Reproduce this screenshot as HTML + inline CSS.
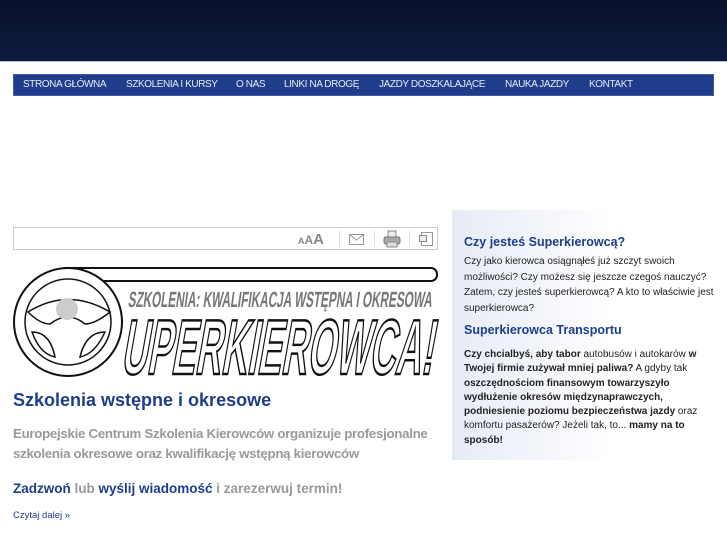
<!DOCTYPE html>
<html><head><meta charset="utf-8"><style>
*{margin:0;padding:0;box-sizing:border-box}
body{width:727px;height:545px;background:#fff;font-family:"Liberation Sans",sans-serif;position:relative;overflow:hidden}
.hdr{position:absolute;left:0;top:0;width:727px;height:61px;background:linear-gradient(#08112a,#0f1c40)}
.hl{position:absolute;left:0;top:61px;width:727px;height:1px;background:#b8bfd0}
.nav{position:absolute;left:13px;top:74px;width:701px;height:22px;background:#1f3d8b;border:1px solid #3b5aa8;color:#e8ecf6;font-size:10px;line-height:20px;white-space:nowrap}
.nav span{position:absolute;top:0;letter-spacing:-.4px}
.tool{position:absolute;left:13px;top:227px;width:425px;height:23px;border:1px solid #ccc}
.side{position:absolute;left:452px;top:210px;width:160px;height:250px;background:linear-gradient(90deg,#e6ecf6,#f4f6fb 60%,#fff)}
h2{position:absolute;font-size:18px;color:#1f3d8b;font-weight:bold;white-space:nowrap}
.gray{position:absolute;left:13px;top:424px;font-size:13.3px;color:#999;font-weight:bold;line-height:20px;white-space:nowrap;letter-spacing:-.3px}
.s{position:absolute;font-size:10px;color:#222;line-height:15.5px;width:255px;left:464px}
.b{color:#1f3d8b}
</style></head><body>
<div class="hdr"></div><div class="hl"></div>
<div class="nav"><span style="left:9px">STRONA GŁÓWNA</span><span style="left:112px">SZKOLENIA I KURSY</span><span style="left:222px">O NAS</span><span style="left:270px">LINKI NA DROGĘ</span><span style="left:365px">JAZDY DOSZKALAJĄCE</span><span style="left:491px">NAUKA JAZDY</span><span style="left:575px">KONTAKT</span></div>
<div class="side"></div>
<div class="tool"><span style="position:absolute;left:284px;top:3px;color:#888;font-weight:bold;white-space:nowrap"><span style="font-size:9px">A</span><span style="font-size:12px">A</span><span style="font-size:15px">A</span></span>
<div style="position:absolute;left:325px;top:3px;width:1px;height:16px;background:#ddd"></div>
<svg style="position:absolute;left:335px;top:6px" width="15" height="11"><rect x=".5" y=".5" width="14" height="10" fill="#fff" stroke="#999"/><path d="M1 1l6.5 5 6.5-5" fill="none" stroke="#999"/></svg>
<div style="position:absolute;left:360px;top:3px;width:1px;height:16px;background:#ddd"></div>
<svg style="position:absolute;left:369px;top:2px" width="18" height="18"><rect x="5" y="1" width="8" height="7" fill="#eee" stroke="#888"/><rect x="1" y="7" width="16" height="7" rx="2" fill="#aaa" stroke="#777"/><rect x="4" y="12" width="10" height="5" fill="#ddd" stroke="#888"/></svg>
<div style="position:absolute;left:395px;top:3px;width:1px;height:16px;background:#ddd"></div>
<svg style="position:absolute;left:405px;top:3px" width="15" height="16"><rect x="2.5" y="1.5" width="11" height="13" fill="#fff" stroke="#999"/><rect x=".5" y="4.5" width="7" height="6" fill="#eee" stroke="#888"/></svg>
</div>
<svg style="position:absolute;left:0;top:262px" width="445" height="120">
<rect x="60" y="6" width="377" height="13" rx="6" fill="#fff" stroke="#111" stroke-width="2"/>
<path d="M80 17 A56 56 0 0 1 120 60" fill="none" stroke="#888" stroke-width="7"/>
<circle cx="68" cy="60" r="54" fill="#fff" stroke="#111" stroke-width="2"/>
<circle cx="68" cy="60" r="43" fill="none" stroke="#111" stroke-width="1.5"/>
<path d="M28 50 Q68 25 110 50 Q95 62 85 62 Q68 48 50 62 Q40 62 28 50Z" fill="#fff" stroke="#111" stroke-width="1.5"/>
<path d="M32 70 Q50 70 55 95 Q40 92 32 70Z M105 70 Q86 70 80 95 Q95 92 105 70Z" fill="#fff" stroke="#111" stroke-width="1.5"/>
<circle cx="67" cy="47" r="11" fill="#ccc"/>
<text x="128" y="45" font-size="22" fill="#777" font-weight="bold" textLength="304" lengthAdjust="spacingAndGlyphs" transform="skewX(-8) translate(6,0)">SZKOLENIA: KWALIFIKACJA WSTĘPNA I OKRESOWA</text>
<text x="122" y="112" font-size="78" fill="#fff" stroke="#111" stroke-width="2.5" font-weight="bold" textLength="312" lengthAdjust="spacingAndGlyphs" transform="skewX(-10) translate(18,0)">UPERKIEROWCA!</text>
</svg>
<h2 style="left:13px;top:390px">Szkolenia wstępne i okresowe</h2>
<div class="gray">Europejskie Centrum Szkolenia Kierowców organizuje profesjonalne<br>szkolenia okresowe oraz kwalifikację wstępną kierowców</div>
<div style="position:absolute;left:13px;top:481px;font-size:13.5px;color:#999;font-weight:bold"><span class="b">Zadzwoń</span> lub <span class="b">wyślij wiadomość</span> i zarezerwuj termin!</div>
<div style="position:absolute;left:13px;top:510px;font-size:9.5px;color:#1f3d8b">Czytaj dalej »</div>
<h2 style="left:464px;top:235px;font-size:12.5px">Czy jesteś Superkierowcą?</h2>
<div class="s" style="top:254px">Czy jako kierowca osiągnąłeś już szczyt swoich możliwości? Czy możesz się jeszcze czegoś nauczyć? Zatem, czy jesteś superkierowcą? A kto to właściwie jest superkierowca?</div>
<h2 style="left:464px;top:323px;font-size:12.5px">Superkierowca Transportu</h2>
<div class="s" style="top:348px;line-height:14.3px"><b>Czy chcialbyś, aby tabor</b> autobusów i autokarów <b>w Twojej firmie zużywał mniej paliwa?</b> A gdyby tak <b>oszczędnościom finansowym towarzyszyło wydłużenie okresów międzynaprawczych, podniesienie poziomu bezpieczeństwa jazdy</b> oraz komfortu pasażerów? Jeżeli tak, to... <b>mamy na to sposób!</b></div>
</body></html>
